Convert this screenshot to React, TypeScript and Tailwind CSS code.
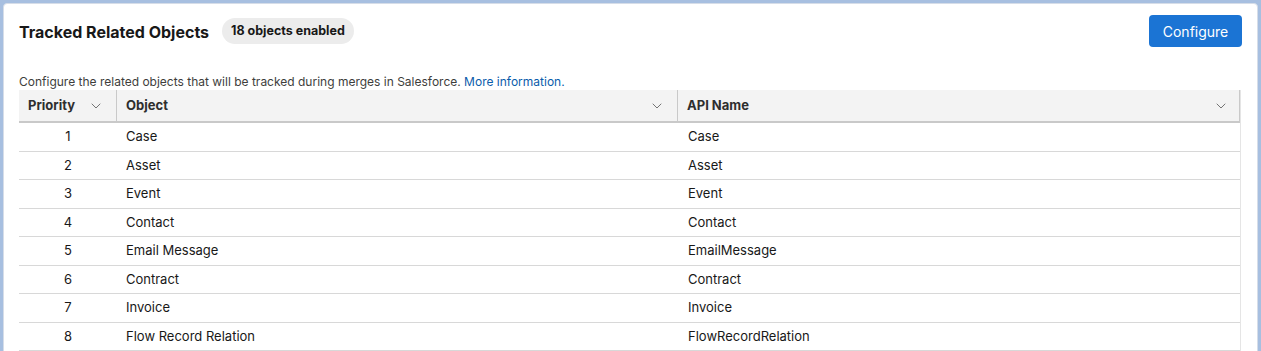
import { FiChevronDown } from "react-icons/fi";

const rows = [
    { priority: 1, object: "Case", api: "Case" },
    { priority: 2, object: "Asset", api: "Asset" },
    { priority: 3, object: "Event", api: "Event" },
    { priority: 4, object: "Contact", api: "Contact" },
    { priority: 5, object: "Email Message", api: "EmailMessage" },
    { priority: 6, object: "Contract", api: "Contract" },
    { priority: 7, object: "Invoice", api: "Invoice" },
    { priority: 8, object: "Flow Record Relation", api: "FlowRecordRelation" },
];

const HeaderCell: React.FC<{ label: string; className?: string; divider?: boolean }> = ({ label, className, divider }) => (
    <div className={`flex items-center justify-between pl-[9px] pr-[12px] ${divider ? "border-r border-[#c9c9c9]" : ""} ${className ?? ""}`}>
        <span className="font-bold text-[13px] text-[#2e2e2e]">{label}</span>
        <FiChevronDown size={16} className="text-[#747474]" strokeWidth={1.5} />
    </div>
);

export default function App() {
    return (
        <div className="w-[1261px] h-[351px] overflow-hidden bg-[#a7bfe0] pt-[3px] pl-[3px] pr-[3px] font-['Inter',sans-serif]">
            <div className="h-[360px] bg-white rounded-t-[4px] border border-[#d6dde8] pl-[15px] pr-[15px]">
                <div className="flex items-center justify-between pt-[11px]">
                    <div className="flex items-center gap-[13px]">
                        <h2 className="text-[16px] font-bold text-[#181818] pt-[1px]">Tracked Related Objects</h2>
                        <span className="rounded-full bg-[#ececec] px-[9px] py-[4px] text-[12.5px] font-bold text-[#181818]">18 objects enabled</span>
                    </div>
                    <button className="h-[32px] w-[93px] rounded-[4px] bg-[#1b74d4] text-[14px] text-white">Configure</button>
                </div>
                <p className="mt-[27px] text-[12px] text-[#3e3e3c] leading-[16px]">
                    Configure the related objects that will be tracked during merges in Salesforce.{" "}
                    <a className="text-[#0b5cab]">More information.</a>
                </p>
                <div className="w-[1222px] border-r border-[#e5e5e5]">
                    <div className="grid grid-cols-[98px_561px_563px] h-[33px] bg-[#f3f3f3] border-b-2 border-[#c9c9c9] border-r border-r-[#c9c9c9]">
                        <HeaderCell label="Priority" divider />
                        <HeaderCell label="Object" divider />
                        <HeaderCell label="API Name" />
                    </div>
                    {rows.map(row => (
                        <div
                            key={row.priority}
                            className="grid grid-cols-[98px_561px_563px] h-[28.5px] items-center border-b border-[#d8d8d8] text-[13px] text-[#181818]"
                        >
                            <span className="text-center">{row.priority}</span>
                            <span className="pl-[9px]">{row.object}</span>
                            <span className="pl-[10px]">{row.api}</span>
                        </div>
                    ))}
                </div>
            </div>
        </div>
    );
}
